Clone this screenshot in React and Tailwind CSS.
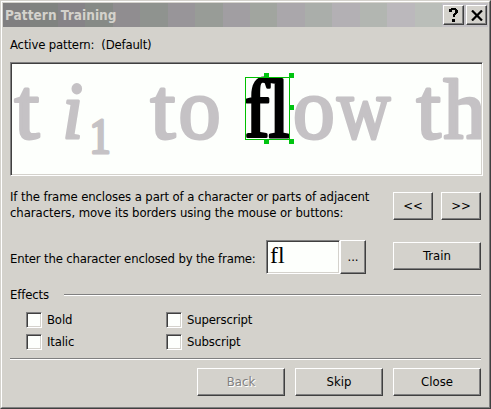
import React from 'react';

const RAISED =
  'border border-t-white border-l-white border-r-[#404040] border-b-[#404040] shadow-[inset_-1px_-1px_0_#808080] bg-[#d4d2cc]';
const SUNKEN =
  'border border-t-[#808080] border-l-[#808080] border-r-white border-b-white shadow-[inset_1px_1px_0_#404040,inset_-1px_-1px_0_#d4d2cc] bg-[#fdfffc]';

const TITLE_BANDS = [
  'bg-[#807f80]', 'bg-[#808380]', 'bg-[#868387]', 'bg-[#868a86]', 'bg-[#908d90]', 'bg-[#8f938f]',
  'bg-[#989599]', 'bg-[#989c97]', 'bg-[#a19ea2]', 'bg-[#a1a59f]', 'bg-[#aaa7ab]', 'bg-[#aaaeaa]',
  'bg-[#b3b0b4]', 'bg-[#b2b6b1]', 'bg-[#bbb8bc]', 'bg-[#babeb9]', 'bg-[#c2c0c4]',
];

function Button({ children, className = '', disabled = false }) {
  return (
    <button
      disabled={disabled}
      className={`${RAISED} h-7 shrink-0 pb-[1px] text-center leading-4 ${className}`}
    >
      {children}
    </button>
  );
}

function Divider({ className = '' }) {
  return <div className={`h-[2px] border-t border-b border-t-[#808080] border-b-white ${className}`} />;
}

function Check({ label }) {
  return (
    <label className="flex h-4 items-center">
      <span className={`${SUNKEN} size-4 shrink-0`} />
      <span className="ml-[5px] leading-4 tracking-[-0.15px]">{label}</span>
    </label>
  );
}

function Glyph({ x, y = 138, sx = 1, size = 86, children, className = '' }) {
  return (
    <text transform={`translate(${x - 12} ${y - 64}) scale(${sx} 1)`} fontSize={size} className={className}>
      {children}
    </text>
  );
}

function Scan() {
  return (
    <svg width="469" height="110" viewBox="0 0 469 110" className="block font-['Liberation_Serif',serif]">
      <g fill="#c5c2c5" stroke="#c5c2c5" strokeWidth="3" strokeLinejoin="round">
        <Glyph x={14.5} y={137.5} sx={1.04}>t</Glyph>
        <Glyph x={62.5} y={137.5} size={80} sx={0.92} className="italic">i</Glyph>
        <Glyph x={89.5} y={152.5} size={50} sx={0.85}>1</Glyph>
        <Glyph x={150.5} y={137.5} sx={1.04}>t</Glyph>
        <Glyph x={178.5} y={137.5} sx={0.98}>o</Glyph>
        <Glyph x={293} y={137.5} sx={0.97}>o</Glyph>
        <Glyph x={337} y={137.5} sx={0.86}>w</Glyph>
        <Glyph x={416.5} y={137.5} sx={1.02}>t</Glyph>
        <Glyph x={443.5} y={137.5} size={84}>h</Glyph>
      </g>
      <g fill="#000" stroke="#000" strokeWidth="3.2" strokeLinejoin="round">
        <Glyph x={244.5} y={137} sx={0.9} size={83}>
          f<tspan x="27">l</tspan>
        </Glyph>
      </g>
      <rect x="233.5" y="13.5" width="44" height="62" fill="none" stroke="#00c000" />
      <g fill="#00c410">
        <rect x="252" y="9" width="5" height="5" />
        <rect x="277" y="9" width="5" height="5" />
        <rect x="277" y="41" width="5" height="5" />
        <rect x="252" y="75" width="5" height="5" />
        <rect x="277" y="75" width="5" height="5" />
      </g>
    </svg>
  );
}

export default function App() {
  return (
    <div className="h-[409px] w-[491px] overflow-hidden border border-t-[#d4d2cc] border-l-[#d4d2cc] border-r-[#404040] border-b-[#404040] bg-[#d4d2cc] font-['DejaVu_Sans_Condensed','DejaVu_Sans',sans-serif] text-[13px] leading-4 text-black [font-stretch:condensed]">
      <div className="h-full border border-t-white border-l-white border-r-[#808080] border-b-[#808080] p-px">
        <header className="grid h-6 grid-cols-1 grid-rows-1">
          <div className="col-start-1 row-start-1 flex overflow-hidden">
            {TITLE_BANDS.map((c) => (
              <span key={c} className={`${c} w-[27.45px] shrink-0`} />
            ))}
            <span className="grow bg-[#c2c0c4]" />
          </div>
          <div className="col-start-1 row-start-1 flex items-start pr-px">
            <h1 className="mt-1 ml-[2px] grow text-[13.5px] leading-4 font-bold tracking-[0.05px] text-[#d4d2cc]">
              Pattern Training
            </h1>
            <button className={`${RAISED} mt-[2px] mr-[2px] flex h-5 w-[21px] items-center justify-center`}>
              <svg width="9" height="14" viewBox="0 0 9 14" shapeRendering="crispEdges">
                <path d="M2 0h5v1h1v1h1v3h-1v1h-1v1h-1v2h-2v-3h1v-1h1v-3h-3v2h-3v-3h1zM3 11h3v3h-3z" />
              </svg>
            </button>
            <button className={`${RAISED} mt-[2px] flex h-5 w-[21px] items-center justify-center`}>
              <svg width="12" height="11" viewBox="0 0 12 11">
                <path d="M1 0.5l10 10M11 0.5l-10 10" stroke="#000" strokeWidth="2.2" />
              </svg>
            </button>
          </div>
        </header>

        <main className="flex flex-col pl-[7px]">
          <p className="mt-[10px] h-4 whitespace-pre">
            <span className="tracking-[-0.16px]">Active pattern:</span>
            <span className="ml-[7px] tracking-[-0.2px]">(Default)</span>
          </p>

          <div className={`${SUNKEN} mt-[9px] h-[114px] w-[473px] overflow-hidden p-px`}>
            <Scan />
          </div>

          <div className="mt-[13px] flex h-8 w-[471px] justify-between">
            <p className="whitespace-nowrap">
              <span className="tracking-[-0.11px]">If the frame encloses a part of a character or parts of adjacent</span>
              <br />
              <span className="tracking-[-0.07px]">characters, move its borders using the mouse or buttons:</span>
            </p>
            <div className="mt-[3px] flex gap-2">
              <Button className="w-10">&lt;&lt;</Button>
              <Button className="w-10">&gt;&gt;</Button>
            </div>
          </div>

          <div className="mt-[19px] flex h-[34px] w-[471px]">
            <p className="mt-[11px] w-[256px] shrink-0 tracking-[-0.18px] whitespace-nowrap">
              Enter the character enclosed by the frame:
            </p>
            <div className={`${SUNKEN} h-[34px] w-[74px] pl-[3px] font-['Liberation_Serif',serif] text-[24px] leading-[28px]`}>
              fl
            </div>
            <button className={`${RAISED} h-[34px] w-[26px] text-center leading-4`}>...</button>
            <Button className="mt-[2px] ml-auto w-[88px]">Train</Button>
          </div>

          <div className="mt-[13px] flex h-4 w-[471px] items-start">
            <span className="w-[54px] tracking-[-0.15px]">Effects</span>
            <Divider className="mt-[7px] grow" />
          </div>
          <div className="mt-[9px] ml-4 grid grid-cols-[140px_140px] gap-y-[6px]">
            <Check label="Bold" />
            <Check label="Superscript" />
            <Check label="Italic" />
            <Check label="Subscript" />
          </div>

          <Divider className="mt-2 w-[471px]" />
          <footer className="mt-2 flex w-[471px] justify-end gap-[10px]">
            <Button disabled className="w-[88px] text-[#808080] [text-shadow:1px_1px_0_#fff]">Back</Button>
            <Button className="w-[88px]">Skip</Button>
            <Button className="w-[88px]">Close</Button>
          </footer>
        </main>
      </div>
    </div>
  );
}
